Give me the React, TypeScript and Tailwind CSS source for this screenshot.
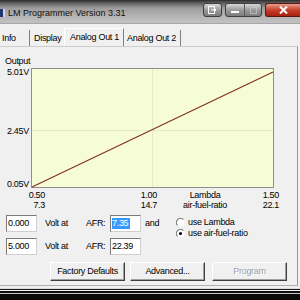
import React from "react";

const FONT = "font-['Liberation_Sans',Arial,sans-serif]";

function TitleBar() {
  return (
    <div className="flex h-[24px] shrink-0 items-start bg-[linear-gradient(to_bottom,#2c2c2c_0px,#5e5e5e_3px,#9c9c9c_8px,#b4b4b4_16px,#c2c2c2_23px,#8a8a8a_24px)] tracking-normal">
      <div className="mt-[9px] h-[8px] w-[5px] bg-[#24366e] shadow-[inset_-2px_0_0_#c8d4f0]" />
      <span className="mt-[7px] pl-[3px] text-[9px] leading-[12px] text-[#111]">
        LM Programmer Version 3.31
      </span>
      <div className="ml-auto mt-[3px] flex">
        <div className="flex h-[14px] w-[19px] items-center justify-center rounded-[3px] border border-[#3e3e3e] bg-[linear-gradient(to_bottom,#d8d8d8,#9a9a9a_50%,#7c7c7c)]">
          <svg width="9" height="8" viewBox="0 0 9 8">
            <rect x="0.5" y="0.5" width="6" height="7" fill="none" stroke="#fff" />
            <path d="M3 4h5M6 2l2 2-2 2" fill="none" stroke="#fff" />
          </svg>
        </div>
        <div className="ml-[3px] flex h-[14px] w-[37px] overflow-hidden rounded-[3px] border border-[#3e3e3e] bg-[linear-gradient(to_bottom,#d8d8d8,#9a9a9a_50%,#7c7c7c)]">
          <div className="flex w-[19px] items-end justify-center border-r border-[#5a5a5a] pb-[3px]">
            <div className="h-[2px] w-[8px] bg-white" />
          </div>
          <div className="flex flex-1 items-center justify-center">
            <div className="h-[7px] w-[7px] border border-[#c8c8c8] opacity-70" />
          </div>
        </div>
        <div className="ml-[3px] flex h-[14px] w-[35px] items-center justify-center rounded-l-[3px] border border-r-0 border-[#5a1a10] bg-[linear-gradient(to_bottom,#e8a090,#c8402a_50%,#a82010)]">
          <svg width="9" height="8" viewBox="0 0 9 8">
            <path d="M1 0.5l7 7M8 0.5l-7 7" stroke="#fff" strokeWidth="2" />
          </svg>
        </div>
      </div>
    </div>
  );
}

function Tabs() {
  return (
    <div className="mt-[4px] flex h-[18px] shrink-0 items-end">
      <div className="flex h-[16px] w-[30px] items-center border-r border-[#808080] pl-[2px]">Info</div>
      <div className="flex h-[16px] w-[34px] items-center pl-[4px]">Display</div>
      <div className="flex h-[18px] w-[60px] items-start border-l border-t border-r border-l-white border-t-white border-r-[#808080] pl-[5px] pt-[3px]">
        Analog Out 1
      </div>
      <div className="flex h-[16px] w-[57px] items-center border-r border-[#808080] pl-[3px]">Analog Out 2</div>
    </div>
  );
}

function Box({ children }: { children: React.ReactNode }) {
  return (
    <div className="flex h-[17px] w-[31px] items-center border border-[#7a7a7a] border-b-[#cfcfcf] border-r-[#cfcfcf] bg-white pl-[1px]">
      {children}
    </div>
  );
}

function Radio({ checked }: { checked?: boolean }) {
  return (
    <svg width="9" height="9" viewBox="0 0 9 9">
      <circle cx="4.5" cy="4.5" r="4" fill="#fff" />
      <path d="M7.3 1.6A4 4 0 0 0 1.6 7.3" fill="none" stroke="#7a7a7a" strokeWidth="1.2" />
      {checked && <circle cx="4.5" cy="4.5" r="1.6" fill="#000" />}
    </svg>
  );
}

function Button({ label, disabled }: { label: string; disabled?: boolean }) {
  return (
    <div
      className={`flex h-[19px] w-[75px] items-center justify-center border border-t-white border-l-white border-r-[#404040] border-b-[#404040] bg-[#f0f0f0] shadow-[inset_-1px_-1px_0_#a0a0a0] ${
        disabled ? "text-[#a0a0a0] [text-shadow:1px_1px_0_#fff]" : ""
      }`}
    >
      {label}
    </div>
  );
}

function Chart() {
  return (
    <svg width="243" height="120" viewBox="0 0 243 120" className="block">
      <rect x="0.5" y="0.5" width="242" height="119" fill="#f6fdd6" stroke="#8e8e8e" />
      <line x1="1" y1="62.5" x2="242" y2="62.5" stroke="#e2eac6" />
      <line x1="121.5" y1="1" x2="121.5" y2="119" stroke="#e2eac6" />
      <line x1="1" y1="119" x2="242" y2="4" stroke="#80301c" strokeWidth="1.1" />
    </svg>
  );
}

function Panel() {
  return (
    <div className="mr-[2px] flex h-[240px] shrink-0 flex-col border-t border-r border-b border-t-[#cdcdcd] border-r-[#9a9a9a] border-b-[#b0b0b0] pt-[9px]">
      <div className="pl-[5px]">Output</div>
      <div className="mt-[1px] flex items-start">
        <div className="flex h-[120px] w-[31px] flex-col items-end pr-[2px]">
          <span className="-mt-[1px]">5.01V</span>
          <span className="mt-[48px]">2.45V</span>
          <span className="mt-[42px]">0.05V</span>
        </div>
        <Chart />
      </div>
      <div className="mt-[2px] flex leading-[10px]">
        <div className="w-[45px] text-right">0.50<br />7.3</div>
        <div className="w-[112px] text-right">1.00<br />14.7</div>
        <div className="w-[96px] text-center">Lambda<br />air-fuel-ratio</div>
        <div className="w-[26px] text-right">1.50<br />22.1</div>
      </div>
      <div className="mt-[5px] flex items-start">
        <div className="flex w-[176px] flex-col gap-[6px] pl-[6px]">
          <div className="flex items-center">
            <Box>0.000</Box>
            <span className="ml-[8px] w-[41px]">Volt at</span>
            <span className="w-[24px]">AFR:</span>
            <Box>
              <span className="bg-[#3399ff] pr-[2px] text-white">7.35</span>
            </Box>
            <span className="ml-[4px]">and</span>
          </div>
          <div className="flex items-center">
            <Box>5.000</Box>
            <span className="ml-[8px] w-[41px]">Volt at</span>
            <span className="w-[24px]">AFR:</span>
            <Box>22.39</Box>
          </div>
        </div>
        <div className="mt-[2px] flex flex-col">
          <div className="flex h-[11px] items-center gap-[3px]">
            <Radio />
            <span>use Lambda</span>
          </div>
          <div className="flex h-[11px] items-center gap-[3px]">
            <Radio checked />
            <span>use air-fuel-ratio</span>
          </div>
        </div>
      </div>
      <div className="mt-[7px] flex pl-[50px]">
        <Button label="Factory Defaults" />
        <div className="ml-[5px]">
          <Button label="Advanced..." />
        </div>
        <div className="ml-[7px]">
          <Button label="Program" disabled />
        </div>
      </div>
    </div>
  );
}

export default function App() {
  return (
    <div className={`flex h-[300px] w-[300px] flex-col overflow-hidden bg-[#f0f0f0] text-[9px] leading-[11px] tracking-[-0.3px] text-black ${FONT}`}>
      <TitleBar />
      <Tabs />
      <Panel />
      <div className="h-[2px] shrink-0" />
      <div className="h-[12px] shrink-0 bg-[linear-gradient(to_bottom,#d8d8d8_0px,#d8d8d8_1px,#1a1a1a_1px,#1a1a1a_2px,#f4f4f4_2px,#f4f4f4_3px,#0e0e0e_3px,#0e0e0e_5px,#c8c8c8_5px,#c8c8c8_6px,#0a0a0a_6px)]" />
    </div>
  );
}
